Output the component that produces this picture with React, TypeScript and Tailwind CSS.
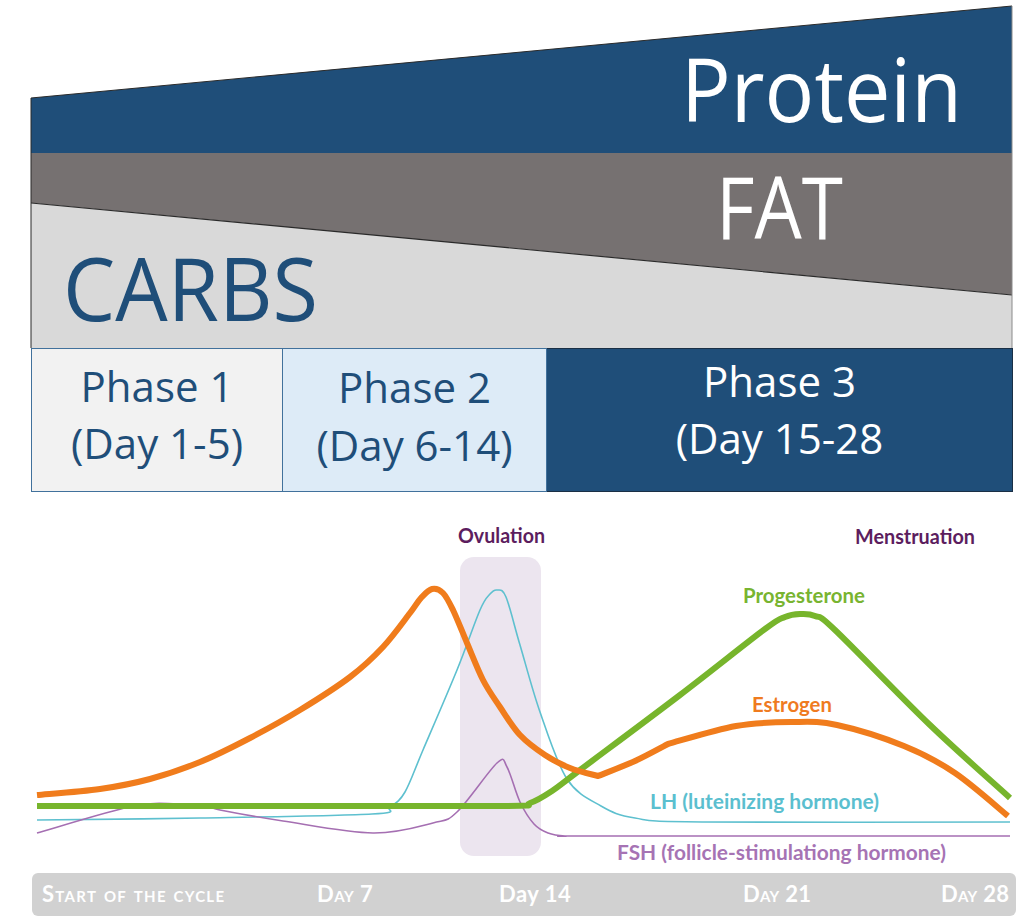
import React from "react";

type Pt = [number, number];

// catmull-rom through the points, drawn as cubic beziers
function smooth(pts: Pt[]): string {
  let d = `M${pts[0][0]},${pts[0][1]}`;
  for (let i = 0; i < pts.length - 1; i++) {
    const p0 = pts[i - 1] || pts[i];
    const p1 = pts[i];
    const p2 = pts[i + 1];
    const p3 = pts[i + 2] || p2;
    const c1x = p1[0] + (p2[0] - p0[0]) / 6;
    const c1y = p1[1] + (p2[1] - p0[1]) / 6;
    const c2x = p2[0] - (p3[0] - p1[0]) / 6;
    const c2y = p2[1] - (p3[1] - p1[1]) / 6;
    d += ` C${c1x.toFixed(1)},${c1y.toFixed(1)} ${c2x.toFixed(1)},${c2y.toFixed(1)} ${p2[0]},${p2[1]}`;
  }
  return d;
}

const estrogenA: Pt[] = [
  [37, 795], [100, 789], [150, 779], [200, 762], [250, 738], [300, 710],
  [350, 677], [383, 647], [410, 613], [421, 598], [432, 589], [443, 593],
  [453, 610], [467, 643], [483, 680], [500, 707], [520, 735], [545, 755],
  [570, 768], [598, 776],
];
const estrogenB: Pt[] = [[598, 776], [635, 761], [668, 744]];
const estrogenC: Pt[] = [
  [668, 744], [736, 726], [793, 722], [837, 725], [904, 746], [955, 773], [1008, 816],
];

const progesterone: Pt[] = [
  [37, 806], [300, 806], [505, 806], [530, 803], [552, 791], [580, 770],
  [680, 695], [765, 629], [785, 617], [800, 614], [815, 616], [835, 630],
  [930, 725], [1010, 798],
];

const lh: Pt[] = [
  [37, 820], [200, 818], [372, 814], [390, 807], [405, 792], [423, 750],
  [457, 670], [480, 610], [490, 594], [497, 590], [506, 597], [520, 645],
  [540, 712], [567, 779], [601, 806], [635, 818], [702, 822], [1010, 822],
];

const fsh: Pt[] = [
  [37, 833], [133, 806], [177, 804], [207, 806], [220, 810], [283, 821],
  [373, 833], [433, 823], [457, 812], [497, 763], [507, 767], [520, 802],
  [534, 824], [548, 833], [565, 836], [600, 836], [1010, 836],
];

function MacroBands() {
  return (
    <svg width="1024" height="348" viewBox="0 0 1024 348" className="block">
      <polygon points="31,98 1012,6 1012,153 31,153" fill="#1f4e79" />
      <polygon points="31,153 1012,153 1012,295 31,203" fill="#767171" />
      <polygon points="31,203 1012,295 1012,348 31,348" fill="#d9d9d9" />
      <polyline points="31,348 31,98 1012,6" fill="none" stroke="#2a2a2a" strokeWidth="1" />
      <line x1="31" y1="203" x2="1012" y2="295" stroke="#2a2a2a" strokeWidth="1.2" />
      <line x1="1012" y1="6" x2="1012" y2="348" stroke="#8a8a8a" strokeWidth="1" />
      <g fontFamily="'Open Sans', sans-serif">
        <text x="681" y="122" fontSize="87" fill="#ffffff" textLength="281" lengthAdjust="spacingAndGlyphs">
          Protein
        </text>
        <text x="716" y="239" fontSize="86" fill="#ffffff" textLength="127" lengthAdjust="spacingAndGlyphs">
          FAT
        </text>
        <text x="63" y="321" fontSize="88" fill="#1f4e79" textLength="255" lengthAdjust="spacingAndGlyphs">
          CARBS
        </text>
      </g>
    </svg>
  );
}

function PhaseRow() {
  return (
    <div className="ml-[31px] flex h-[144px] w-[982px] font-['Open_Sans',sans-serif] text-[42px] leading-[57px]">
      <div className="flex w-[252px] flex-col items-center border border-[#41719c] bg-[#f2f2f2] pt-[8px] text-[#1f4e79]">
        <div>Phase 1</div>
        <div>(Day 1-5)</div>
      </div>
      <div className="flex w-[264px] flex-col items-center border-y border-r border-[#41719c] bg-[#ddebf7] pt-[9px] text-[#1f4e79]">
        <div>Phase 2</div>
        <div className="leading-[59px]">(Day 6-14)</div>
      </div>
      <div className="flex flex-1 flex-col items-center border border-l-0 border-[#1a2f45] bg-[#1f4e79] pt-[3px] text-white">
        <div>Phase 3</div>
        <div>(Day 15-28</div>
      </div>
    </div>
  );
}

function HormoneChart() {
  return (
    <svg width="1024" height="363" viewBox="0 510 1024 363" className="block">
      <rect x="460" y="557" width="81" height="299" rx="14" fill="#ece5ef" />
      <path d={smooth(lh)} fill="none" stroke="#5ec0cf" strokeWidth="1.6" strokeLinejoin="round" />
      <path d={smooth(fsh)} fill="none" stroke="#a56fb2" strokeWidth="1.6" strokeLinejoin="round" />
      <path d={smooth(progesterone)} fill="none" stroke="#77b52c" strokeWidth="6" strokeLinejoin="round" />
      <path
        d={`${smooth(estrogenA)} ${smooth(estrogenB).replace("M", "L")} ${smooth(estrogenC).replace("M", "L")}`}
        fill="none"
        stroke="#f07c1c"
        strokeWidth="6"
        strokeLinejoin="round"
      />
      <g fontFamily="Lato, sans-serif" fontWeight="700" fontSize="20">
        <text x="458" y="543" fill="#5c1d5e" textLength="87" lengthAdjust="spacingAndGlyphs">
          Ovulation
        </text>
        <text x="855" y="544" fill="#5c1d5e" textLength="120" lengthAdjust="spacingAndGlyphs">
          Menstruation
        </text>
        <text x="743" y="603" fill="#78b430" textLength="122" lengthAdjust="spacingAndGlyphs">
          Progesterone
        </text>
        <text x="752" y="712" fill="#ef7b1f" textLength="80" lengthAdjust="spacingAndGlyphs">
          Estrogen
        </text>
        <text x="650" y="809" fill="#5bbfcf" textLength="229" lengthAdjust="spacingAndGlyphs">
          LH (luteinizing hormone)
        </text>
        <text x="617" y="860" fill="#a673b4" textLength="329" lengthAdjust="spacingAndGlyphs">
          FSH (follicle-stimulationg hormone)
        </text>
      </g>
    </svg>
  );
}

function DayAxis() {
  return (
    <div className="ml-[32px] flex h-[43px] w-[984px] rounded-md bg-[#d1d1d1] pt-[10px] font-['Lato',sans-serif] text-[22px] font-bold leading-[22px] text-white">
      <div className="ml-[10px] w-[275px] tracking-[1.3px] [font-variant:small-caps]">Start of the cycle</div>
      <div className="w-[182px] tracking-[0.5px] [font-variant:small-caps]">Day 7</div>
      <div className="w-[244px] tracking-[0.5px]">Day 14</div>
      <div className="w-[198px] tracking-[0.3px] [font-variant:small-caps]">Day 21</div>
      <div className="tracking-[0.3px] [font-variant:small-caps]">Day 28</div>
    </div>
  );
}

export default function App() {
  return (
    <div className="h-[916px] w-[1024px] overflow-hidden bg-white">
      <MacroBands />
      <PhaseRow />
      <div className="h-[18px]" />
      <HormoneChart />
      <DayAxis />
    </div>
  );
}
